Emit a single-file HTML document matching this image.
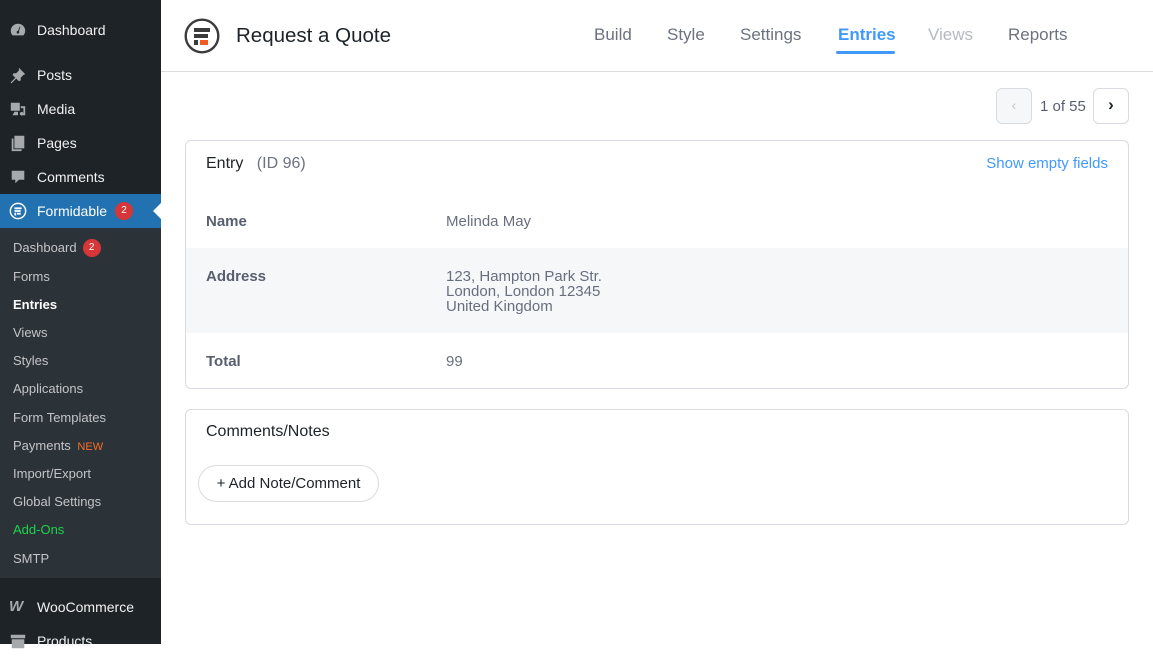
<!DOCTYPE html>
<html><head><style>
*{margin:0;padding:0;box-sizing:border-box}
body{width:1153px;height:644px;overflow:hidden;background:#fff;font-family:"Liberation Sans",sans-serif;position:relative}
#sb{position:absolute;left:0;top:0;width:161px;height:644px;background:#1d2327}
.mi{position:absolute;left:0;width:161px;height:34px;color:#f0f0f1;font-size:14px;line-height:34px;padding-left:37px}
.ic{position:absolute;left:9px;top:8px;width:18px;height:18px}
#sub{position:absolute;left:0;top:228px;width:161px;height:350px;background:#2c3338}
.si{position:absolute;left:13px;font-size:13px;color:#c3c4c7;line-height:16px}
.badge{display:inline-block;position:relative;top:0;background:#d63638;color:#fff;border-radius:9px;font-size:10px;line-height:18px;height:18px;min-width:18px;text-align:center;vertical-align:top;margin-left:6px}
#hdr{position:absolute;left:161px;top:0;right:0;height:72px;border-bottom:1px solid #dcdcde}
.tab{position:absolute;top:25px;font-size:17px;color:#6b7280}
.box{position:absolute;left:185px;width:944px;border:1px solid #d8dbe2;border-radius:6px;background:#fff}
.lbl{position:absolute;left:20px;font-size:15px;font-weight:bold;color:#585f6f}
.val{position:absolute;left:260px;font-size:15px;color:#676f7f;line-height:15px}
</style></head><body>
<div id="sb">
<div class="mi" style="top:13px"><svg class="ic" viewBox="0 0 20 20"><path fill="#a7aaad" d="M10 3a8 8 0 0 0-8 8c0 2 .7 3.7 2 5h12a8 8 0 0 0 2-5 8 8 0 0 0-8-8zm0 11a1.5 1.5 0 1 1 0-3l2-5 .6.3L11 11.5A1.5 1.5 0 0 1 10 14z"/></svg>Dashboard</div>
<div class="mi" style="top:58px"><svg class="ic" viewBox="0 0 20 20"><path fill="#a7aaad" d="M11 2l7 7-2 1-3 3 0 3-2 1-3-3-5 5-1 0 0-1 5-5-3-3 1-2 3 0 3-3z"/></svg>Posts</div>
<div class="mi" style="top:92px"><svg class="ic" viewBox="0 0 20 20"><path fill="#a7aaad" d="M2 3h10v9H2zM13 7h5v10h-3a2 2 0 1 1 1-2V9h-3zM6 13h4v4H4z"/></svg>Media</div>
<div class="mi" style="top:126px"><svg class="ic" viewBox="0 0 20 20"><path fill="#a7aaad" d="M6 2h11v14H6zM3 5h2v12h9v2H3z"/></svg>Pages</div>
<div class="mi" style="top:160px"><svg class="ic" viewBox="0 0 20 20"><path fill="#a7aaad" d="M3 3h14v10h-6l-4 4v-4H3z"/></svg>Comments</div>
<div class="mi" style="top:194px;background:#2271b1;color:#fff"><svg class="ic" viewBox="0 0 20 20"><circle cx="10" cy="10" r="8.5" fill="none" stroke="#fff" stroke-width="1.6"/><path fill="#fff" d="M6 6h8v2H6zM6 9h7v2H6zM6 12h2v3H6zM9 12h4v2H9z"/></svg>Formidable<span class="badge" style="top:8px;margin-left:8px">2</span><div style="position:absolute;right:0;top:9px;border:8px solid transparent;border-right-color:#fff"></div></div>
<div id="sub">
<div class="si" style="top:12px">Dashboard<span class="badge" style="top:-1px">2</span></div>
<div class="si" style="top:41px">Forms</div>
<div class="si" style="top:69px;color:#fff;font-weight:bold">Entries</div>
<div class="si" style="top:97px">Views</div>
<div class="si" style="top:125px">Styles</div>
<div class="si" style="top:153px">Applications</div>
<div class="si" style="top:182px">Form Templates</div>
<div class="si" style="top:210px">Payments <span style="color:#f56e28;font-size:11px;margin-left:3px">NEW</span></div>
<div class="si" style="top:238px">Import/Export</div>
<div class="si" style="top:266px">Global Settings</div>
<div class="si" style="top:294px;color:#1ed14b">Add-Ons</div>
<div class="si" style="top:323px">SMTP</div>
</div>
<div class="mi" style="top:590px"><span style="position:absolute;left:9px;top:0;color:#a7aaad;font-weight:bold;font-style:italic;font-size:15px">W</span>WooCommerce</div>
<div class="mi" style="top:624px"><svg class="ic" viewBox="0 0 20 20"><path fill="#a7aaad" d="M2 3h16v4H2zM3 8h14v10H3z"/></svg>Products</div>
</div>
<div id="hdr">
<svg style="position:absolute;left:23px;top:18px" width="36" height="36" viewBox="0 0 36 36"><circle cx="18" cy="18" r="16.3" fill="none" stroke="#3b3b3b" stroke-width="2.4"/><path fill="#3b3b3b" d="M10 10h16v4H10zM10 16h14v4H10zM10 22h4v5h-4z"/><rect x="16" y="22" width="8" height="5" fill="#f05a24"/></svg>
<div style="position:absolute;left:75px;top:24px;font-size:20.5px;color:#1d2327">Request a Quote</div>
<div class="tab" style="left:433px">Build</div>
<div class="tab" style="left:506px">Style</div>
<div class="tab" style="left:579px">Settings</div>
<div class="tab" style="left:677px;color:#4199fd;font-weight:bold">Entries</div>
<div style="position:absolute;left:675px;top:51px;width:59px;height:3px;background:#4199fd;border-radius:2px"></div>
<div class="tab" style="left:767px;color:#b5b9c2">Views</div>
<div class="tab" style="left:847px">Reports</div>
</div>
<div style="position:absolute;left:996px;top:88px;width:36px;height:36px;border:1px solid #d8dbe2;border-radius:6px;background:#f6f7f9;color:#c3c4c7;text-align:center;line-height:33px;font-size:14px">‹</div>
<div style="position:absolute;left:1040px;top:98px;font-size:15px;color:#585f6f">1 of 55</div>
<div style="position:absolute;left:1093px;top:88px;width:36px;height:36px;border:1px solid #d8dbe2;border-radius:6px;color:#1d2327;text-align:center;line-height:32px;font-size:17px;font-weight:bold">›</div>
<div class="box" style="top:140px;height:249px;overflow:hidden">
<div style="position:absolute;left:20px;top:14px;font-size:16px;color:#1d2327">Entry <span style="color:#6b7280;margin-left:9px">(ID 96)</span></div>
<div style="position:absolute;right:20px;top:14px;font-size:15px;color:#4199fd">Show empty fields</div>
<div class="lbl" style="top:72px">Name</div><div class="val" style="top:73px">Melinda May</div>
<div style="position:absolute;left:0;right:0;top:107px;height:85px;background:#f6f7f9"></div>
<div class="lbl" style="top:127px">Address</div><div class="val" style="top:128px">123, Hampton Park Str.<br>London, London 12345<br>United Kingdom</div>
<div class="lbl" style="top:212px">Total</div><div class="val" style="top:213px">99</div>
</div>
<div class="box" style="top:409px;height:116px">
<div style="position:absolute;left:20px;top:13px;font-size:16px;color:#1d2327">Comments/Notes</div>
<div style="position:absolute;left:12px;top:55px;width:181px;height:37px;border:1px solid #d8dbe2;border-radius:19px;text-align:center;line-height:35px;font-size:15px;color:#1d2327">+ Add Note/Comment</div>
</div>
</body></html>
